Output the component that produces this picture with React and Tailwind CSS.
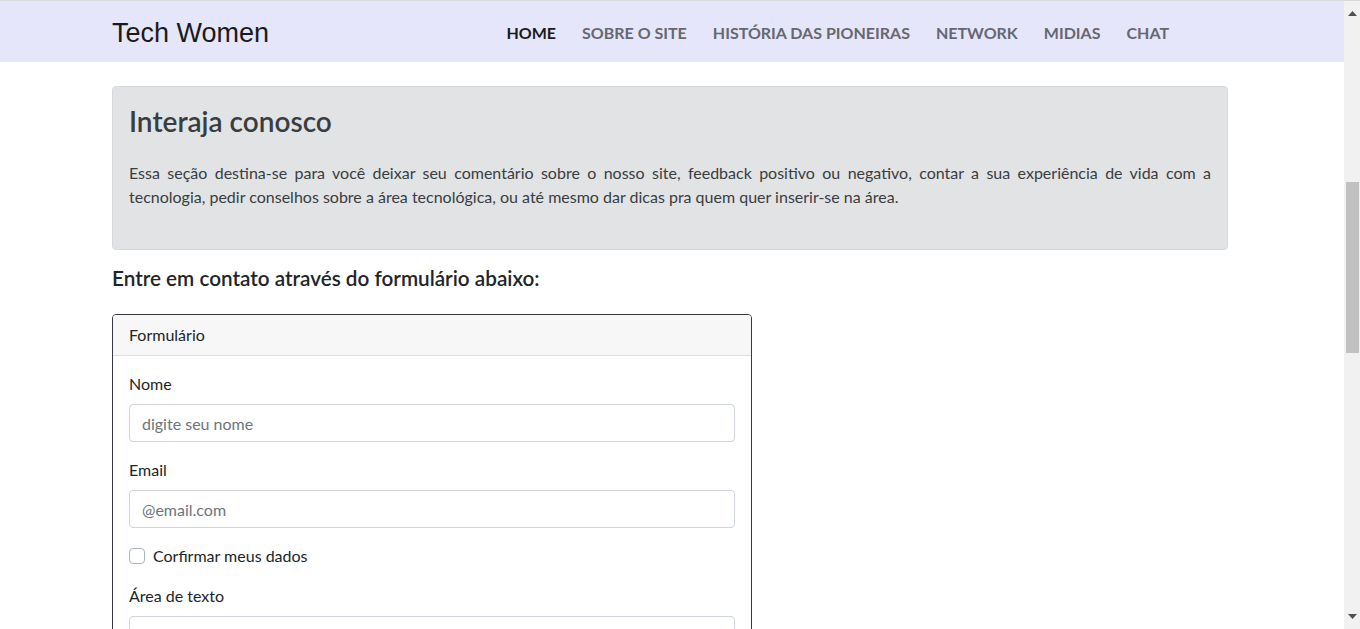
import React from 'react';

const navLinks = ['HOME', 'SOBRE O SITE', 'HISTÓRIA DAS PIONEIRAS', 'NETWORK', 'MIDIAS', 'CHAT'];

const font = { fontFamily: 'Lato, "Open Sans", sans-serif' };

const Navbar = () => (
  <nav className="h-[61px] bg-[#e6e6fa] flex items-center pt-[3px]">
    <div className="ml-[112px] w-[1116px] flex items-center">
      <a className="text-[27px] text-[#1a1a1a] font-['Liberation_Sans',Arial,sans-serif] leading-none">
        Tech Women
      </a>
      <ul className="ml-auto mr-[59px] flex items-center gap-[26px] font-['Lato',sans-serif]">
        {navLinks.map((link, i) => (
          <li
            key={link}
            className={`text-[16px] font-bold ${i === 0 ? 'text-[#1a1a1a]' : 'text-[#676770]'}`}
          >
            {link}
          </li>
        ))}
      </ul>
    </div>
  </nav>
);

const Field = ({ label, placeholder }) => (
  <div className="mb-4">
    <label className="block mb-2 leading-6 text-[16px] text-[#212529]">{label}</label>
    <input
      className="block w-full h-[38px] px-3 border border-[#ced4da] rounded-[4px] text-[16px] placeholder:text-[#6c757d] outline-none"
      placeholder={placeholder}
    />
  </div>
);

const ScrollBar = () => (
  <div className="w-4 bg-[#f1f1f1] flex flex-col items-center relative">
    <svg className="mt-[10px]" width="9" height="5" viewBox="0 0 9 5">
      <path d="M0 5 L4.5 0 L9 5 Z" fill="#505050" />
    </svg>
    <div className="absolute left-[2px] top-[181px] w-[13px] h-[171px] bg-[#c1c1c1]" />
    <svg className="mt-auto mb-[10px]" width="9" height="5" viewBox="0 0 9 5">
      <path d="M0 0 L9 0 L4.5 5 Z" fill="#505050" />
    </svg>
  </div>
);

export default function App() {
  return (
    <div className="h-[629px] overflow-hidden flex flex-col bg-white" style={font}>
      <div className="h-px bg-[#d8d8d8]" />
      <div className="flex flex-1 min-h-0">
        <main className="flex-1 min-w-0 overflow-hidden">
          <Navbar />
          <div className="ml-[112px] w-[1116px] pt-[24px]">
            <div className="bg-[#e2e3e5] border border-[#d6d8db] rounded-[4px] px-4 pt-[17px] pb-6 text-[#383d41]">
              <h1 className="text-[28px] font-semibold leading-[34px]">Interaja conosco</h1>
              <p className="mt-[23px] mb-4 text-[16px] leading-6 text-justify">
                Essa seção destina-se para você deixar seu comentário sobre o nosso site, feedback positivo ou
                negativo, contar a sua experiência de vida com a tecnologia, pedir conselhos sobre a área
                tecnológica, ou até mesmo dar dicas pra quem quer inserir-se na área.
              </p>
            </div>

            <h2 className="mt-4 text-[20.7px] font-semibold leading-6 text-[#212529]">
              Entre em contato através do formulário abaixo:
            </h2>

            <div className="mt-6 w-[640px] border border-[#343a40] rounded-[4px] overflow-hidden">
              <div className="bg-[#f7f7f7] border-b border-[#dfdfdf] px-4 py-2 leading-6 text-[16px] text-[#212529]">
                Formulário
              </div>
              <div className="px-4 pt-4 pb-4">
                <Field label="Nome" placeholder="digite seu nome" />
                <Field label="Email" placeholder="@email.com" />
                <div className="mb-4 flex items-center gap-2 leading-6">
                  <span className="w-4 h-4 border border-[#adb5bd] rounded-[4px] bg-white" />
                  <span className="text-[16px] text-[#212529]">Corfirmar meus dados</span>
                </div>
                <label className="block mb-2 leading-6 text-[16px] text-[#212529]">Área de texto</label>
                <textarea className="block w-full h-[80px] border border-[#ced4da] rounded-[4px] resize-none" />
              </div>
            </div>
          </div>
        </main>
        <ScrollBar />
      </div>
    </div>
  );
}
